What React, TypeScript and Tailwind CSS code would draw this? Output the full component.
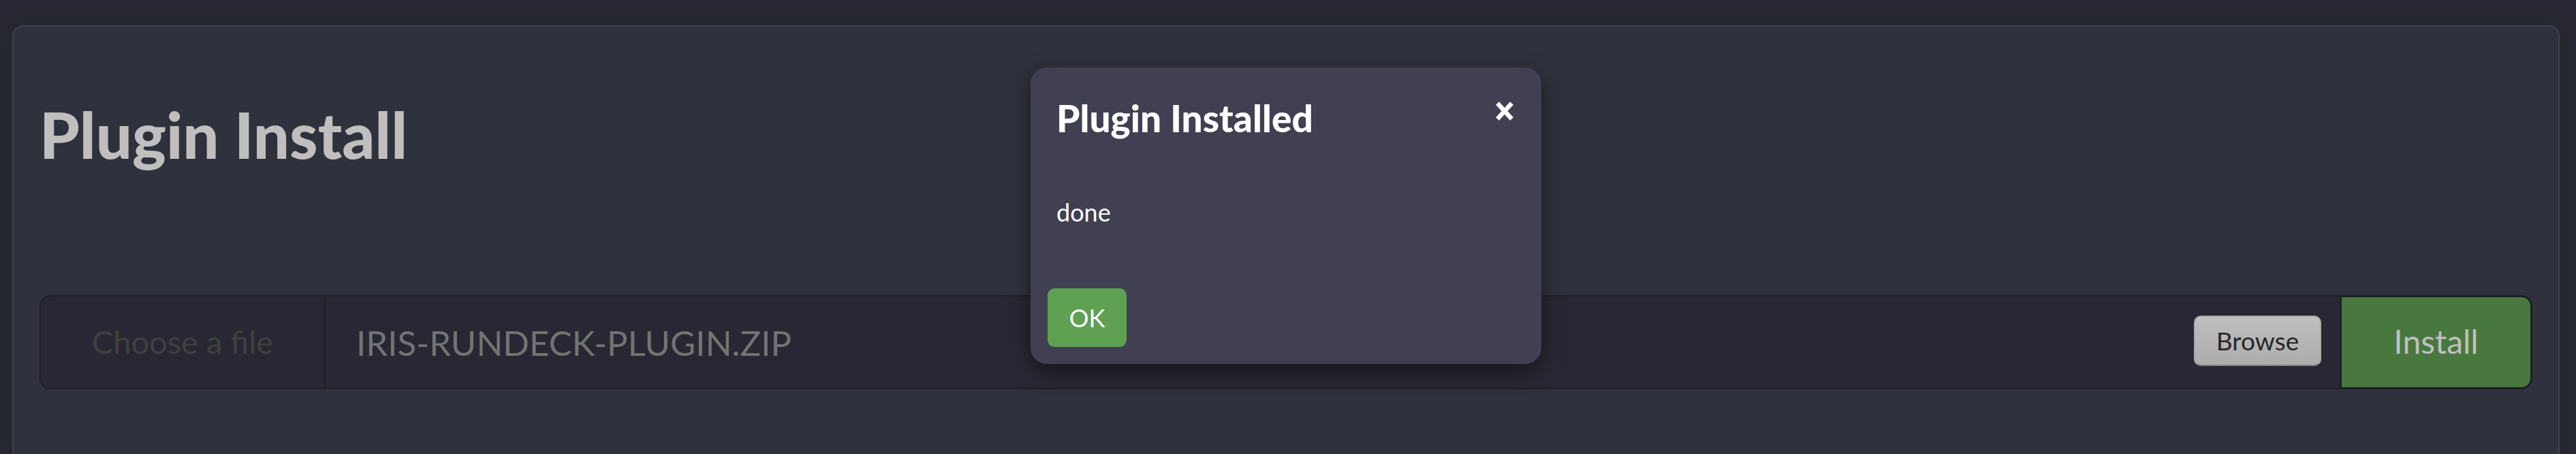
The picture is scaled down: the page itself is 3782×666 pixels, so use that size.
import React, { useState } from "react";

export default function App() {
  const [fileName, setFileName] = useState("IRIS-RUNDECK-PLUGIN.ZIP");
  const [open, setOpen] = useState(true);

  return (
    <div className="relative flex min-h-screen flex-col overflow-hidden bg-[#282834] pt-[37px] pr-[6px] font-['Lato','Noto_Sans',sans-serif]">
      <main className="mx-[18px] flex-1 rounded-t-[16px] border-2 border-b-0 border-[#404252] bg-[#2f313d] px-[38px] pt-[98px] shadow-[0_0_32px_8px_#24282c]">
        <h1 className="text-[94px] leading-[120px] font-black whitespace-nowrap text-[#bfbfbf]">
          Plugin Install
        </h1>

        <form
          className="mt-[176px] flex h-[138px] items-stretch"
          onSubmit={(e) => {
            e.preventDefault();
            setOpen(true);
          }}
        >
          <label
            htmlFor="plugin-file"
            className="flex w-[420px] shrink-0 items-center justify-center rounded-l-[16px] border-2 border-[#1e1e25] bg-[#282834] pb-[2px] text-[47px] text-[#40403f]"
          >
            Choose a file
          </label>
          <div className="flex min-w-0 flex-1 items-center border-y-2 border-[#1e1e25] bg-[#282834] pr-[27px] pl-[45px]">
            <input
              id="plugin-file"
              type="text"
              value={fileName}
              onChange={(e) => setFileName(e.target.value)}
              className="h-full min-w-0 flex-1 bg-transparent text-[51px] text-[#737373] outline-none"
            />
            <button
              type="button"
              className="mb-[4px] h-[74px] w-[187px] shrink-0 rounded-[10px] border-2 border-[#a9a9a9] border-b-[#828282] bg-linear-to-b from-[#bfbfbf] to-[#acacac] text-[37px] leading-[40px] text-[#272727]"
            >
              Browse
            </button>
          </div>
          <button
            type="submit"
            className="w-[283px] shrink-0 rounded-r-[16px] border-3 border-[#1e1e25] bg-[#48783e] pb-[2px] text-[48px] text-[#bfbfbf]"
          >
            Install
          </button>
        </form>
      </main>

      {open && (
        <div className="absolute inset-0 flex items-start justify-center pt-[99px] pr-[6px]">
          <div
            role="dialog"
            aria-labelledby="dialog-title"
            className="flex h-[435px] w-[750px] flex-col rounded-[24px] bg-[#404052] text-white shadow-[0_10px_30px_rgba(0,0,0,0.5)]"
          >
            <header className="flex items-start justify-between pt-[40px] pr-[36px] pl-[38px]">
              <h2 id="dialog-title" className="text-[55px] leading-[68px] font-black">
                Plugin Installed
              </h2>
              <button
                type="button"
                aria-label="Close"
                onClick={() => setOpen(false)}
                className="flex h-[48px] w-[36px] items-center justify-center"
              >
                <svg width="26" height="28" viewBox="0 0 26 28" fill="none" stroke="white" strokeWidth="6.5">
                  <path d="M2.5 2.5 23.5 25.5M23.5 2.5 2.5 25.5" />
                </svg>
              </button>
            </header>
            <p className="mt-[80px] px-[38px] text-[36px] leading-[48px]">done</p>
            <footer className="mt-auto pb-[25px] pl-[25px]">
              <button
                type="button"
                onClick={() => setOpen(false)}
                className="h-[86px] w-[116px] rounded-[10px] bg-[#5fa052] text-[36px] leading-[48px]"
              >
                OK
              </button>
            </footer>
          </div>
        </div>
      )}
    </div>
  );
}
